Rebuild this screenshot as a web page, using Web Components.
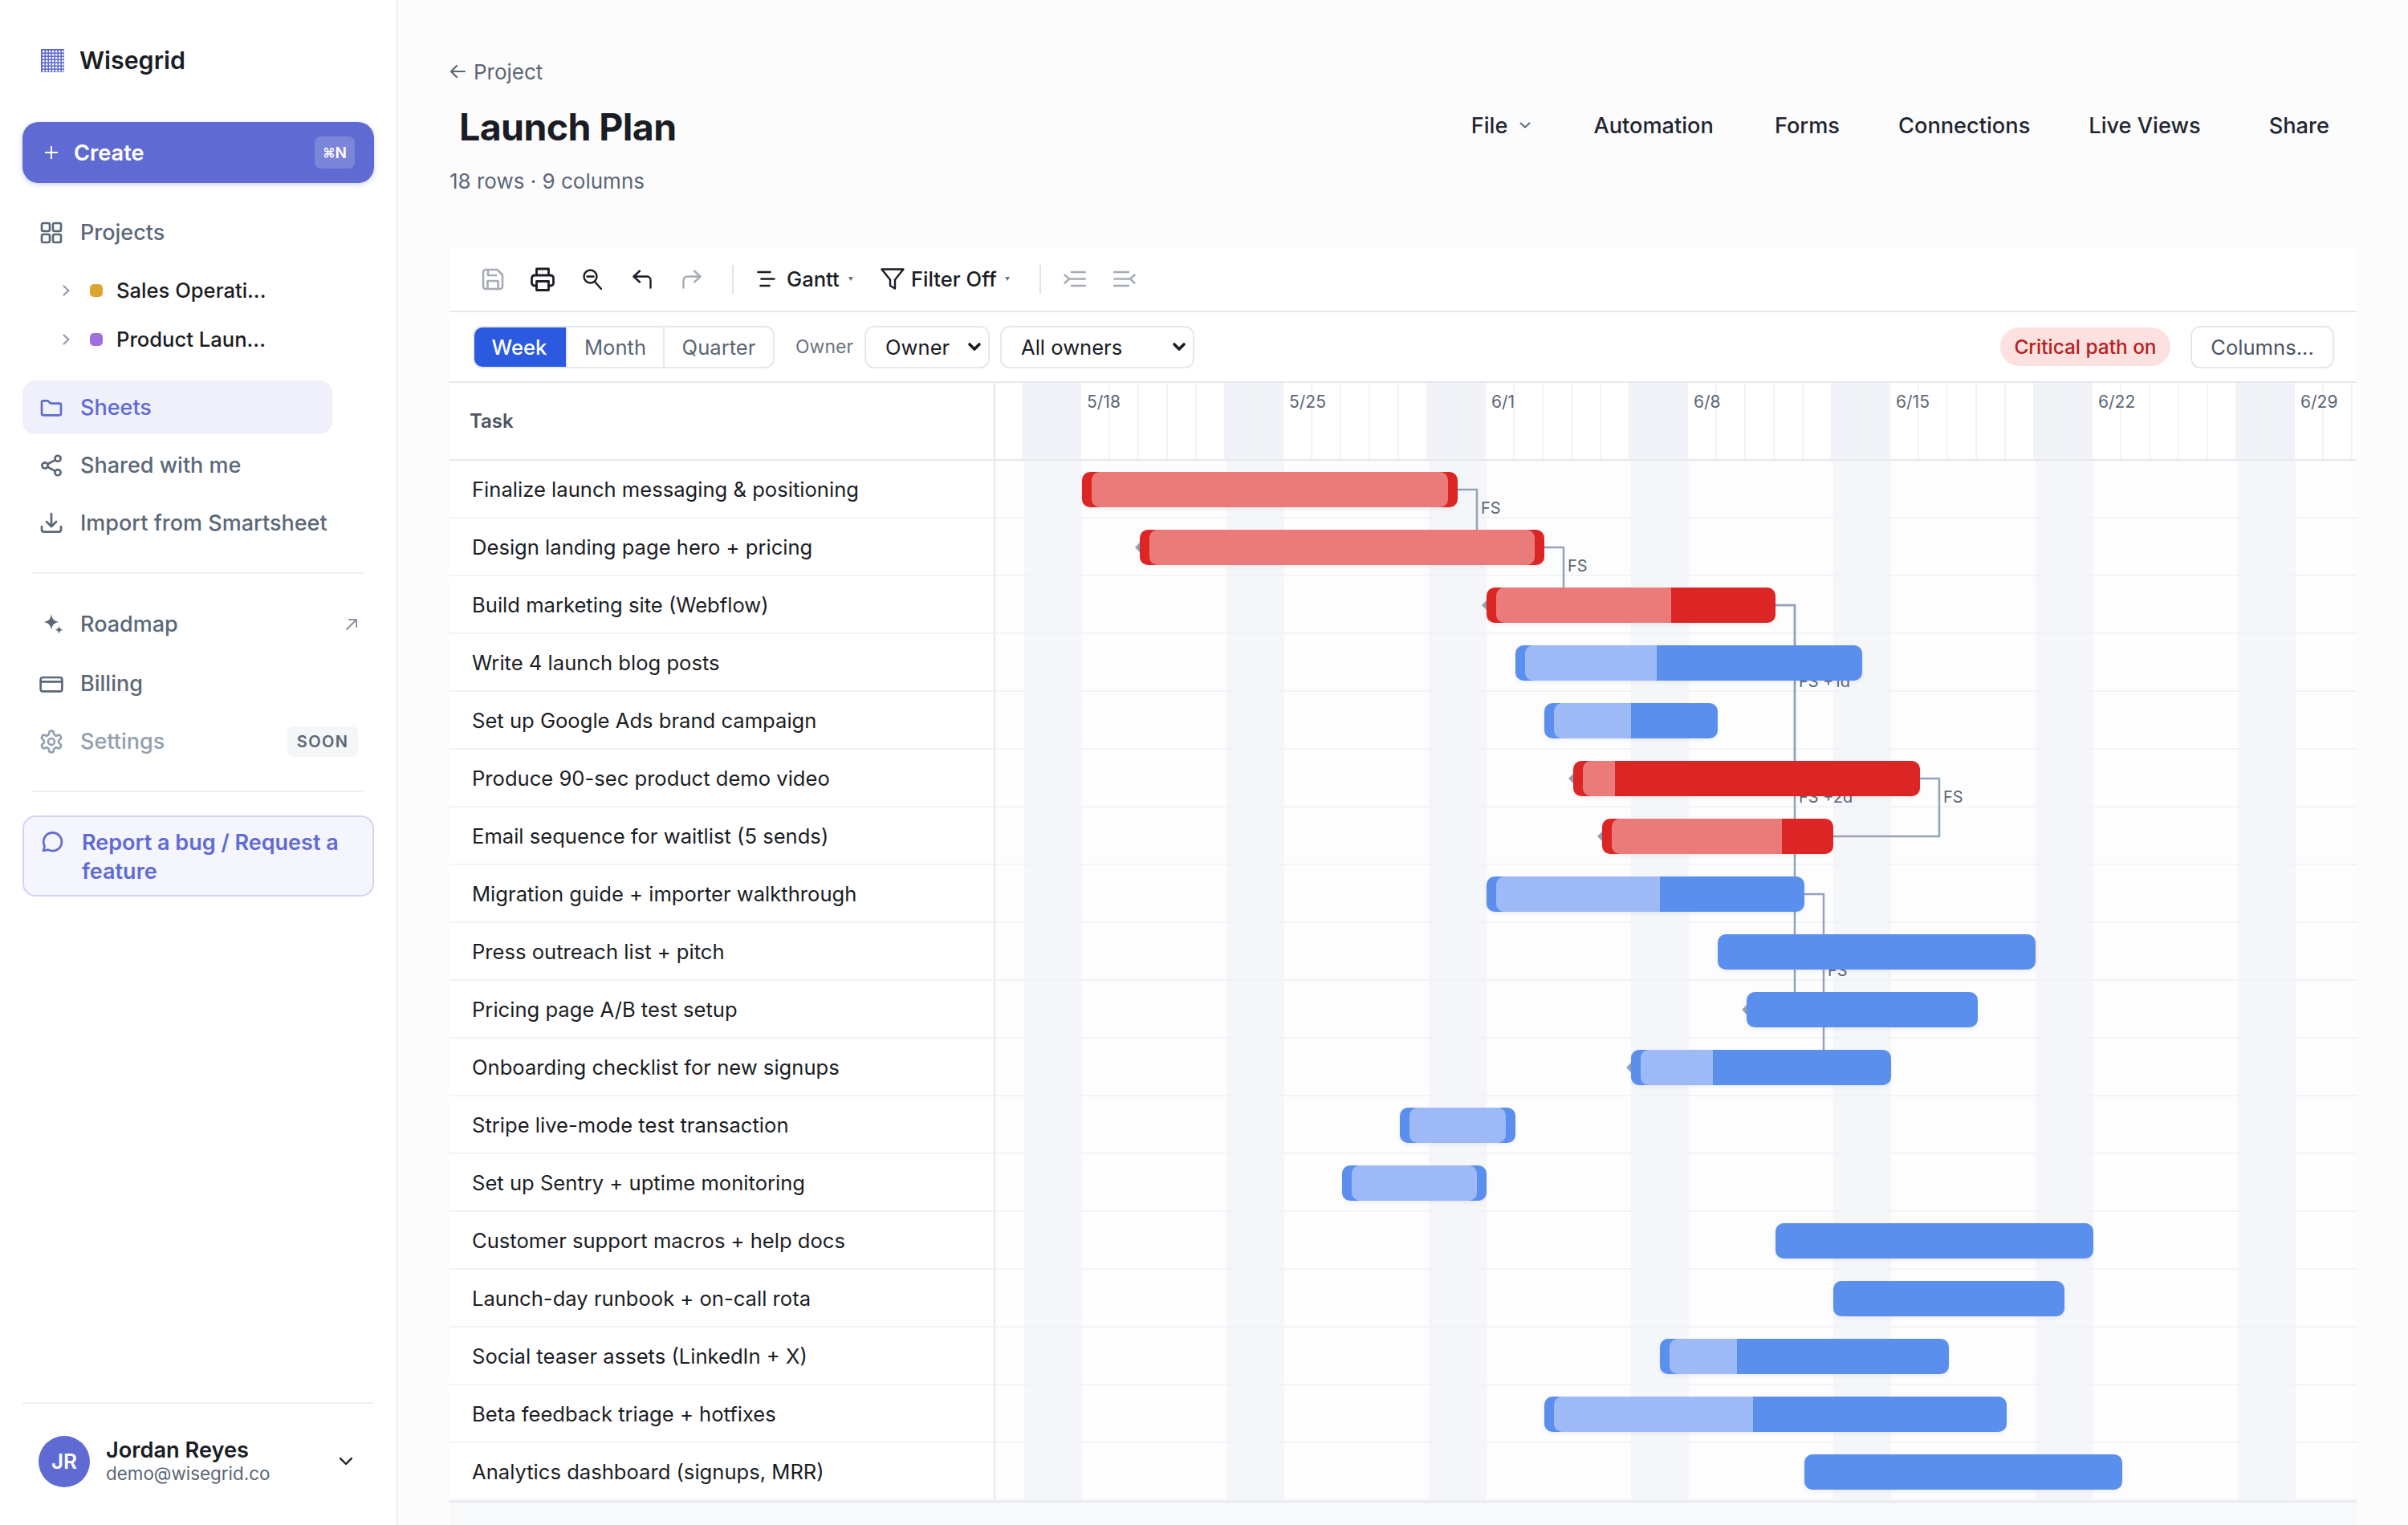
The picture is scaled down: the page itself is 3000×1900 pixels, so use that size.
<!doctype html>
<html>
<head>
<meta charset="utf-8">
<title>Launch Plan</title>
<style>
  html, body { margin: 0; height: 100%; }
  body { font-family: Inter, "Liberation Sans", sans-serif; color: #1a1d24; background: #fcfcfd; }
</style>
</head>
<body>
<wg-app>
  <wg-sidebar slot="side"></wg-sidebar>
  <wg-page-head slot="head" crumb="Project" heading="Launch Plan" sub="18 rows · 9 columns"></wg-page-head>
  <wg-sheet slot="sheet">
    <wg-toolbar></wg-toolbar>
    <wg-filters></wg-filters>
    <wg-gantt></wg-gantt>
  </wg-sheet>
</wg-app>

<script>
const svg = (w, h, vb, body, sw = 2) =>
  `<svg width="${w}" height="${h}" viewBox="${vb}" fill="none" stroke="currentColor" stroke-width="${sw}" stroke-linecap="round" stroke-linejoin="round">${body}</svg>`;

const icons = {
  grid: `<rect x="3" y="3" width="7.5" height="7.5" rx="1.5"/><rect x="13.5" y="3" width="7.5" height="7.5" rx="1.5"/><rect x="3" y="13.5" width="7.5" height="7.5" rx="1.5"/><rect x="13.5" y="13.5" width="7.5" height="7.5" rx="1.5"/>`,
  folder: `<path d="M3 7a1.500 1.500 0 0 1 1.500-1.500h4.300l2.400 2.500h8.300A1.500 1.500 0 0 1 21 9.500v8A1.500 1.500 0 0 1 19.500 19h-15A1.500 1.500 0 0 1 3 17.500z"/>`,
  share: `<circle cx="18" cy="5.500" r="2.700"/><circle cx="6" cy="12" r="2.700"/><circle cx="18" cy="18.500" r="2.700"/><path d="m8.400 13.300 7.200 3.900M15.600 6.800l-7.200 3.900"/>`,
  download: `<path d="M12 3v11.500M7.500 10.500l4.500 4.500 4.500-4.500M3 15v3a2 2 0 0 0 2 2h14a2 2 0 0 0 2-2v-3"/>`,
  card: `<rect x="2" y="6" width="20" height="13" rx="2"/><path d="M2 10h20"/>`,
  gear: `<path d="M12.200 2h-.4a2 2 0 0 0-2 2v.2a2 2 0 0 1-1 1.700l-.4.3a2 2 0 0 1-2 0l-.2-.1a2 2 0 0 0-2.700.7l-.2.4a2 2 0 0 0 .7 2.700l.2.1a2 2 0 0 1 1 1.700v.5a2 2 0 0 1-1 1.800l-.2.1a2 2 0 0 0-.7 2.700l.2.4a2 2 0 0 0 2.700.7l.2-.1a2 2 0 0 1 2 0l.4.3a2 2 0 0 1 1 1.700v.2a2 2 0 0 0 2 2h.4a2 2 0 0 0 2-2v-.2a2 2 0 0 1 1-1.700l.4-.3a2 2 0 0 1 2 0l.2.1a2 2 0 0 0 2.700-.7l.2-.4a2 2 0 0 0-.7-2.700l-.2-.1a2 2 0 0 1-1-1.800v-.5a2 2 0 0 1 1-1.700l.2-.1a2 2 0 0 0 .7-2.700l-.2-.4a2 2 0 0 0-2.700-.7l-.2.1a2 2 0 0 1-2 0l-.4-.3a2 2 0 0 1-1-1.700V4a2 2 0 0 0-2-2z"/><circle cx="12" cy="12" r="3"/>`,
  bubble: `<path d="M7.500 20a8.500 8.500 0 1 0-3.300-3.300L3 21z"/>`,
};

class WgApp extends HTMLElement {
  constructor() {
    super();
    this.attachShadow({ mode: "open" });
    this.shadowRoot.innerHTML = `
    <style>
      :host { display: grid; grid-template-columns: 496px 1fr; width: 3000px; height: 1900px; overflow: hidden; }
      main { padding: 0 64px; min-width: 0; display: flex; flex-direction: column; }
      slot[name="sheet"]::slotted(*) { flex: 1; }
    </style>
    <slot name="side"></slot>
    <main>
      <slot name="head"></slot>
      <slot name="sheet"></slot>
    </main>`;
  }
}
customElements.define("wg-app", WgApp);

function logoDots() {
  let s = "";
  for (let r = 0; r < 7; r++) for (let c = 0; c < 7; c++)
    s += `<rect x="${2 + c * 4}" y="${2 + r * 4}" width="2.4" height="2.4"/>`;
  return s;
}
function chevronRight() {
  return svg(9, 14, "0 0 9 14", `<path d="m1.500 1.500 6 5.500-6 5.500"/>`);
}

class WgSidebar extends HTMLElement {
  constructor() {
    super();
    this.attachShadow({ mode: "open" });
    this.shadowRoot.innerHTML = `
    <style>
      :host { display: flex; flex-direction: column; box-sizing: border-box; height: 1900px; background: #fff;
        border-right: 2px solid #eeeff5; padding: 0 28px; }
      .brand { height: 150px; display: flex; align-items: center; gap: 19px; padding-left: 23px; font-size: 30.4px; font-weight: 600; }
      .logo { width: 29px; height: 29px; flex: none; }
      .create { height: 76px; box-sizing: border-box; border-radius: 20px; background: #5f6bd2; color: #fff; display: flex; align-items: center;
        padding: 0 24px 0 28px; font-size: 27.2px; font-weight: 600; box-shadow: 0 2px 6px rgba(95,107,210,.3); margin-top: 2px; }
      .create .plus { width: 16px; height: 16px; margin-right: 20px; flex: none; }
      .create b { margin-left: auto; background: rgba(255,255,255,.18); border-radius: 8px; width: 50px; height: 40px; display: flex; align-items: center; justify-content: center; font-size: 19px; font-weight: 600; }
      .create b small { font-size: 16px; font-weight: 600; }
      nav { display: flex; flex-direction: column; }
      .sub { display: flex; align-items: center; height: 61px; padding-left: 50px; font-size: 25.6px; font-weight: 500; }
      .sub svg { color: #8b94a3; flex: none; }
      .sub i { width: 16px; height: 16px; border-radius: 5px; margin: 0 17px 0 25px; flex: none; }
      hr { border: 0; height: 2px; background: #eeeff5; margin: 0 12px; flex: none; }
      .report { box-sizing: border-box; height: 101px; margin-top: 29px; border: 2px solid #d3d6f3; border-radius: 16px; background: #f4f5fd; color: #5f6bd2;
        display: flex; padding: 14px 16px 0 20px; gap: 20px; font-size: 27px; font-weight: 600; line-height: 36px; }
      .report svg { flex: none; margin-top: 0; }
      .user { margin-top: auto; height: 153px; border-top: 2px solid #eeeff5; display: flex; align-items: center; padding: 0 26px 8px 20px; gap: 20px; box-sizing: border-box; }
      .avatar { width: 64px; height: 64px; border-radius: 50%; background: #5f6bd2; color: #fff; font-size: 26px; font-weight: 600; display: flex; align-items: center; justify-content: center; flex: none; }
      .who { display: flex; flex-direction: column; flex: 1; min-width: 0; }
      .who b { font-size: 27.2px; font-weight: 600; line-height: 30px; }
      .who span { font-size: 22.4px; color: #5b6675; line-height: 28px; }
    </style>
    <div class="brand"><svg class="logo" viewBox="0 0 29 29"><rect width="29" height="29" fill="#5f6bd2"/><g fill="#fff">${logoDots()}</g></svg><span>Wisegrid</span></div>
    <div class="create">
      <svg class="plus" viewBox="0 0 16 16" fill="none" stroke="currentColor" stroke-width="2"><path d="M8 0v16M0 8h16"/></svg>
      <span>Create</span><b><small>⌘</small>N</b>
    </div>
    <nav style="margin-top:28px">
      <wg-nav icon="grid">Projects</wg-nav>
    </nav>
    <nav style="margin-top:8px">
      <div class="sub">${chevronRight()}<i style="background:#dba52e"></i><span>Sales Operati...</span></div>
      <div class="sub">${chevronRight()}<i style="background:#a06fdf"></i><span>Product Laun...</span></div>
    </nav>
    <nav style="margin-top:21px">
      <wg-nav icon="folder" active>Sheets</wg-nav>
      <wg-nav icon="share" style="margin-top:5px">Shared with me</wg-nav>
      <wg-nav icon="download" style="margin-top:5px">Import from Smartsheet</wg-nav>
    </nav>
    <hr style="margin-top:28px">
    <nav style="margin-top:29px">
      <wg-nav icon="sparkle">Roadmap<svg slot="end" width="16" height="16" viewBox="0 0 16 16" fill="none" stroke="#8b94a3" stroke-width="2" stroke-linecap="round" stroke-linejoin="round"><path d="M2 14 14 2M5 2h9v9"/></svg></wg-nav>
      <wg-nav icon="card" style="margin-top:7px">Billing</wg-nav>
      <wg-nav icon="gear" muted style="margin-top:5px">Settings<wg-soon slot="end"></wg-soon></wg-nav>
    </nav>
    <hr style="margin-top:28px">
    <div class="report">${svg(32, 32, "0 0 24 24", icons.bubble)}<span>Report a bug / Request a feature</span></div>
    <div class="user">
      <div class="avatar">JR</div>
      <div class="who"><b>Jordan Reyes</b><span>demo@wisegrid.co</span></div>
      <svg width="18" height="11" viewBox="0 0 18 11" fill="none" stroke="#1a1d24" stroke-width="2.4" stroke-linecap="round" stroke-linejoin="round"><path d="m2 2 7 7 7-7"/></svg>
    </div>`;
  }
}

class WgNav extends HTMLElement {
  constructor() {
    super();
    this.attachShadow({ mode: "open" });
  }
  connectedCallback() {
    const name = this.getAttribute("icon");
    const art = name === "sparkle"
      ? `<svg width="32" height="32" viewBox="0 0 32 32" fill="currentColor"><path d="M16 3c1 6.500 3 8.500 9.500 10-6.500 1.500-8.500 3.500-9.500 10-1-6.500-3-8.500-9.500-10C13 11.500 15 9.500 16 3z"/><path d="M25.500 17.500c.6 3.400 1.700 4.500 5 5.300-3.300.7-4.400 1.800-5 5.200-.6-3.400-1.700-4.500-5-5.200 3.300-.8 4.400-1.900 5-5.300z"/></svg>`
      : svg(32, 32, "0 0 24 24", icons[name]);
    this.shadowRoot.innerHTML = `
    <style>
      :host { display: flex; flex: none; box-sizing: border-box; height: 67px; align-items: center; font-size: 27px; font-weight: 500; color: #5b6878; padding: 0 20px; gap: 20px; border-radius: 16px; }
      :host([active]) { background: #eff0fa; color: #5f6bd2; width: 386px; }
      :host([muted]) { color: #94a0b0; }
      svg { flex: none; }
      .txt { flex: 1; display: flex; align-items: center; justify-content: space-between; }
    </style>
    ${art}<div class="txt"><span><slot></slot></span><slot name="end"></slot></div>`;
  }
}
customElements.define("wg-nav", WgNav);

class WgSoon extends HTMLElement {
  constructor() {
    super();
    this.attachShadow({ mode: "open" });
    this.shadowRoot.innerHTML = `
    <style>
      :host { display: flex; width: 88px; height: 38px; border-radius: 8px; background: #f5f6f8; color: #5b6675; font-size: 20px; font-weight: 600; letter-spacing: 1.4px; align-items: center; justify-content: center; }
    </style>SOON`;
  }
}
customElements.define("wg-soon", WgSoon);
customElements.define("wg-sidebar", WgSidebar);

class WgPageHead extends HTMLElement {
  constructor() {
    super();
    this.attachShadow({ mode: "open" });
  }
  connectedCallback() {
    this.shadowRoot.innerHTML = `
    <style>
      :host { display: block; height: 308px; box-sizing: border-box; padding-top: 72px; flex: none; }
      .crumb { display: flex; align-items: center; gap: 10px; height: 34px; font-size: 26px; color: #5b6675; }
      .row { display: flex; align-items: center; height: 70px; margin-top: 17px; }
      h1 { margin: 0 0 0 12px; font-size: 46.5px; font-weight: 700; letter-spacing: -.6px; color: #1a1d24; }
      .menu { margin-left: auto; display: flex; align-items: center; font-size: 27.2px; font-weight: 500; color: #1f2530; margin-right: 34px; margin-top: -4px; }
      .menu span { margin-left: 73px; }
      .menu .file { margin-left: 0; display: flex; align-items: center; gap: 15px; }
      .sub { margin-top: 16px; font-size: 26px; color: #5b6675; line-height: 34px; }
    </style>
    <div class="crumb">
      <svg width="20" height="18" viewBox="0 0 20 18" fill="none" stroke="currentColor" stroke-width="2.2" stroke-linecap="round" stroke-linejoin="round"><path d="M19 9H2M9 2 2 9l7 7"/></svg>
      <span>${this.getAttribute("crumb")}</span>
    </div>
    <div class="row">
      <h1>${this.getAttribute("heading")}</h1>
      <div class="menu">
        <span class="file">File <svg width="14" height="8" viewBox="0 0 14 8" fill="none" stroke="#5b6675" stroke-width="2" stroke-linecap="round" stroke-linejoin="round"><path d="m1.500 1.500 5.500 5 5.500-5"/></svg></span>
        <span style="margin-left:78px">Automation</span>
        <span style="margin-left:76px">Forms</span>
        <span>Connections</span>
        <span>Live Views</span>
        <span style="margin-left:85px">Share</span>
      </div>
    </div>
    <div class="sub">${this.getAttribute("sub")}</div>`;
  }
}
customElements.define("wg-page-head", WgPageHead);

class WgSheet extends HTMLElement {
  constructor() {
    super();
    this.attachShadow({ mode: "open" });
    this.shadowRoot.innerHTML = `
    <style>
      :host { display: block; background: #f8f9fb; }
    </style>
    <slot></slot>`;
  }
}
customElements.define("wg-sheet", WgSheet);

class WgToolbar extends HTMLElement {
  constructor() {
    super();
    this.attachShadow({ mode: "open" });
    this.shadowRoot.innerHTML = `
    <style>
      :host { display: flex; align-items: center; height: 81px; box-sizing: border-box; background: #fff; border-bottom: 2px solid #e6e8ee; padding-left: 40px; color: #1a1d24; font-size: 25.6px; font-weight: 500; }
      .off { color: #a5abb6; }
      .sep { width: 2px; height: 36px; background: #e0e3ea; flex: none; }
      .tri { display: inline-block; width: 0; height: 0; border-left: 3px solid transparent; border-right: 3px solid transparent; border-top: 5px solid #6b7280; }
      .item { display: flex; align-items: center; flex: none; }
      svg { flex: none; display: block; }
    </style>
    <div class="item off" style="width:61px">${svg(28, 28, "0 0 28 28", `<path d="M5 2h14.500L26 8.500V23a3 3 0 0 1-3 3H5a3 3 0 0 1-3-3V5a3 3 0 0 1 3-3z"/><path d="M8 2v7h10M7.500 26V16h13v10"/>`, 2.6)}</div>
    <div class="item" style="width:65px">${svg(30, 30, "0 0 30 30", `<path d="M7.500 10V2h15v8M7.500 23H5a3.500 3.500 0 0 1-3.500-3.500V13.500A3.500 3.500 0 0 1 5 10h20a3.500 3.500 0 0 1 3.500 3.500v6A3.500 3.500 0 0 1 25 23h-2.500"/><rect x="7.500" y="17.500" width="15" height="11"/>`, 2.8)}</div>
    <div class="item" style="width:62px">${svg(24, 26, "0 0 24 26", `<circle cx="9.500" cy="9.500" r="8"/><path d="M15 16l8 9M5.500 9.500h8"/>`, 2.4)}</div>
    <div class="item" style="width:61px">${svg(24, 24, "0 0 24 24", `<path d="M9 1.500 1.500 8.500l7.500 7M1.500 8.500H18a4.500 4.500 0 0 1 4.500 4.500v9.500"/>`, 2.4)}</div>
    <div class="item off" style="width:63px">${svg(25, 24, "0 0 25 24", `<path d="m16 1.500 7.500 7-7.500 7M23.500 8.500H7A4.500 4.500 0 0 0 2.500 13v9.500"/>`, 2.4)}</div>
    <div class="sep"></div>
    <div class="item" style="margin-left:29px">${svg(23, 21, "0 0 23 21", `<path d="M1.500 2h15M5.500 10.500h16M4.500 19h11"/>`, 2.6)}</div>
    <div class="item" style="margin-left:14px;width:83px"><span>Gantt</span><i class="tri" style="margin-left:auto"></i></div>
    <div class="item" style="margin-left:34px">${svg(30, 27, "0 0 30 27", `<path d="M1.500 1.500h27L18 14.500V25.500l-6-3.500v-7.500z"/>`, 2.4)}</div>
    <div class="item" style="margin-left:8px;width:123px"><span>Filter Off</span><i class="tri" style="margin-left:auto"></i></div>
    <div class="sep" style="margin-left:37px"></div>
    <div class="item off" style="margin-left:28px">${svg(28, 21, "0 0 28 21", `<path d="M10 2h17M7 10.500h20M10 19h17M1.500 5.500 7 10.500l-5.500 5"/>`, 2.4)}</div>
    <div class="item off" style="margin-left:34px">${svg(28, 21, "0 0 28 21", `<path d="M1 2h18M1 10.500h20M1 19h18M26.500 5.500l-5.500 5 5.500 5"/>`, 2.4)}</div>`;
  }
}
customElements.define("wg-toolbar", WgToolbar);

function selArrow() {
  return `<svg width="18" height="12" viewBox="0 0 18 12" fill="none" stroke="#1a1d24" stroke-width="3.6" stroke-linecap="round" stroke-linejoin="round"><path d="m3 3 6 6 6-6"/></svg>`;
}

class WgFilters extends HTMLElement {
  constructor() {
    super();
    this.attachShadow({ mode: "open" });
    this.shadowRoot.innerHTML = `
    <style>
      :host { display: flex; align-items: center; height: 88px; box-sizing: border-box; background: #fff; border-bottom: 2px solid #e6e8ee; padding: 0 28px 0 29px; font-size: 25.6px; }
      .seg { display: flex; height: 53px; box-sizing: border-box; border: 2px solid #e6e8ee; border-radius: 12px; overflow: hidden; flex: none; }
      .seg span { display: flex; align-items: center; justify-content: center; color: #5b6675; border-left: 2px solid #e6e8ee; box-sizing: border-box; }
      .seg span.on { background: #2b59e0; color: #fff; border-left: 0; font-weight: 500; margin: -2px 0 -2px -2px; }
      .lbl { margin-left: 26px; color: #6b7280; font-size: 23px; width: 86px; }
      .sel { height: 53px; box-sizing: border-box; border: 2px solid #e6e8ee; border-radius: 12px; background: #fff; display: flex; align-items: center; justify-content: space-between; padding: 0 8px 0 24px; color: #1a1d24; flex: none; }
      .pill { margin-left: auto; height: 48px; width: 212px; border-radius: 24px; background: #fde0e0; color: #b91c1c; font-size: 24.4px; font-weight: 500; display: flex; align-items: center; justify-content: center; }
      .cols { margin-left: 25px; width: 179px; height: 53px; box-sizing: border-box; border: 2px solid #e6e8ee; border-radius: 12px; color: #4b5563; display: flex; align-items: center; justify-content: center; }
    </style>
    <div class="seg">
      <span class="on" style="width:116px">Week</span>
      <span style="width:121px">Month</span>
      <span style="width:137px">Quarter</span>
    </div>
    <div class="lbl">Owner</div>
    <div class="sel" style="width:156px"><span>Owner</span>${selArrow()}</div>
    <div class="sel" style="width:242px;margin-left:13px"><span>All owners</span>${selArrow()}</div>
    <div class="pill">Critical path on</div>
    <div class="cols">Columns...</div>`;
  }
}
customElements.define("wg-filters", WgFilters);

// day 0 is the left edge of the chart, 36px per day
const DAY = 36;
// name, first day, end day, colour, width of the done part in px ("all" = finished)
const TASKS = [
  ["Finalize launch messaging & positioning", 3, 16, "red", "all"],
  ["Design landing page hero + pricing", 5, 19, "red", "all"],
  ["Build marketing site (Webflow)", 17, 27, "red", 230],
  ["Write 4 launch blog posts", 18, 30, "blue", 176],
  ["Set up Google Ads brand campaign", 19, 25, "blue", 108],
  ["Produce 90-sec product demo video", 20, 32, "red", 52],
  ["Email sequence for waitlist (5 sends)", 21, 29, "red", 224],
  ["Migration guide + importer walkthrough", 17, 28, "blue", 216],
  ["Press outreach list + pitch", 25, 36, "blue", 0],
  ["Pricing page A/B test setup", 26, 34, "blue", 0],
  ["Onboarding checklist for new signups", 22, 31, "blue", 102],
  ["Stripe live-mode test transaction", 14, 18, "blue", "all"],
  ["Set up Sentry + uptime monitoring", 12, 17, "blue", "all"],
  ["Customer support macros + help docs", 27, 38, "blue", 0],
  ["Launch-day runbook + on-call rota", 29, 37, "blue", 0],
  ["Social teaser assets (LinkedIn + X)", 23, 33, "blue", 96],
  ["Beta feedback triage + hotfixes", 19, 35, "blue", 260],
  ["Analytics dashboard (signups, MRR)", 28, 39, "blue", 0],
];
// from row, to row, label
const LINKS = [
  [0, 1, "FS"], [1, 2, "FS"], [2, 5, "FS +1d"], [2, 9, "FS +2d"], [5, 6, "FS"], [7, 10, "FS"],
];
const WEEKS = ["5/18", "5/25", "6/1", "6/8", "6/15", "6/22", "6/29"];

class WgGantt extends HTMLElement {
  constructor() {
    super();
    this.attachShadow({ mode: "open" });
    this.shadowRoot.innerHTML = `
    <style>
      :host { display: block; width: 2376px; position: relative; background: #fff; }
      .head { display: grid; grid-template-columns: 680px 1fr; height: 95px; border-bottom: 2px solid #e6e8ee; }
      .task-h { display: flex; align-items: center; padding-left: 25px; font-size: 24px; font-weight: 600; color: #4b5563; border-right: 2px solid #e6e8ee; }
      .days { display: flex; overflow: hidden; min-width: 0; }
      .days div { flex: 0 0 36px; width: 36px; min-width: 0; box-sizing: border-box; border-right: 2px solid #f1f3f7; font-size: 21px; color: #5b6675; padding: 10px 0 0 7px; white-space: nowrap; line-height: 28px; }
      .days div.we { background: #f1f3f8; }
      .body { position: relative; border-bottom: 2px solid #e6e8ee; }
      .row { display: grid; grid-template-columns: 680px 1fr; height: 72px; box-sizing: border-box; border-bottom: 2px solid #f1f3f7; }
      .row:last-of-type { border-bottom: 0; }
      .name { display: flex; align-items: center; padding-left: 28px; font-size: 25.6px; color: #1a1d24; border-right: 2px solid #e6e8ee; background: #fff; }
      .chart { background-color: #fdfdfe; background-image: repeating-linear-gradient(90deg, transparent 0 36px, #f5f6fa 36px 108px, transparent 108px 252px); }
      .canvas { position: absolute; left: 680px; top: 0; right: 0; bottom: 0; }
      svg.links { position: absolute; left: 0; top: 0; width: 100%; height: 100%; overflow: visible; }
      .tag { position: absolute; font-size: 20px; line-height: 24px; color: #5b6675; white-space: nowrap; }
      .bar { position: absolute; height: 44px; border-radius: 10px; box-shadow: 0 2px 5px rgba(15,23,42,.07); overflow: hidden; }
      .bar.red { background: #dc2626; }
      .bar.blue { background: #5b8fee; }
      .bar i { position: absolute; top: 0; bottom: 0; left: 12px; display: block; border-radius: 10px 0 0 10px; }
      .bar.red i { background: #eb7b7b; }
      .bar.blue i { background: #9db9f6; }
      .bar i.all { border-radius: 10px; }
    </style>
    <div class="head">
      <div class="task-h">Task</div>
      <div class="days"></div>
    </div>
    <div class="body"></div>`;
    this.build();
  }

  build() {
    let html = "";
    for (let i = 0; i < 47; i++) {
      const wd = i % 7;
      html += `<div class="${wd === 1 || wd === 2 ? "we" : ""}" ${i === 0 ? 'style="flex-basis:35px;width:35px"' : ""}>${wd === 3 ? WEEKS[(i - 3) / 7] : ""}</div>`;
    }
    this.shadowRoot.querySelector(".days").innerHTML = html;

    const rows = TASKS.map(t => `<div class="row"><div class="name">${t[0].replace("&", "&amp;")}</div><div class="chart"></div></div>`).join("");

    const mid = r => 36 + r * 72;
    let paths = "", tags = "", heads = "";
    for (const [a, b, label] of LINKS) {
      const x0 = TASKS[a][2] * DAY, x1 = x0 + 24;
      const y0 = mid(a), y1 = mid(b);
      const target = TASKS[b][1] * DAY;
      paths += `<path d="M${x0} ${y0}H${x1}V${y1}H${target}"/>`;
      heads += `<path d="M${target - 6} ${y1}l6-6v12z"/>`;
      tags += `<div class="tag" style="left:${x1 + 5}px;top:${(y0 + y1) / 2 - 25}px">${label}</div>`;
    }

    const bars = TASKS.map((t, r) => {
      const l = t[1] * DAY, w = (t[2] - t[1]) * DAY;
      let fill = "";
      if (t[4] === "all") fill = `<i class="all" style="width:${w - 24}px"></i>`;
      else if (t[4]) fill = `<i style="width:${t[4] - 12}px"></i>`;
      return `<div class="bar ${t[3]}" style="left:${l}px;top:${14 + r * 72}px;width:${w}px">${fill}</div>`;
    }).join("");

    this.shadowRoot.querySelector(".body").innerHTML = `${rows}
      <div class="canvas">
        <svg class="links" fill="none" stroke="#94a3b8" stroke-width="2.5">${paths}<g fill="#94a3b8" stroke="none">${heads}</g></svg>
        ${tags}
        ${bars}
      </div>`;
  }
}
customElements.define("wg-gantt", WgGantt);
</script>
</body>
</html>
